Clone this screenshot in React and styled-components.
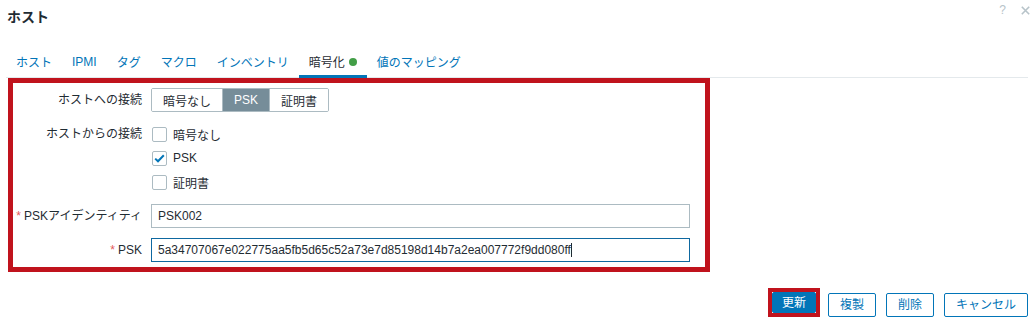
import React from "react";
import styled, { createGlobalStyle } from "styled-components";

const GlobalStyle = createGlobalStyle`
  html, body {
    margin: 0;
    padding: 0;
    background: #ffffff;
  }
  body {
    font-family: "Liberation Sans", Arial, "Noto Sans CJK JP", sans-serif;
    font-size: 12px;
    color: #1f2c33;
  }
`;

/* ---------------- layout ---------------- */

const Dialog = styled.div`
  width: 1034px;
  height: 323px;
  box-sizing: border-box;
  padding: 0 6px;
  display: flex;
  flex-direction: column;
  overflow: hidden;
`;

const Header = styled.header`
  height: 48px;
  display: flex;
  justify-content: space-between;
  align-items: flex-start;
`;

const Title = styled.h1`
  margin: 0;
  padding: 8px 0 0 1px;
  font-size: 14px;
  line-height: 18px;
  font-weight: bold;
  color: #1f2c33;
`;

const HeaderIcons = styled.div`
  display: flex;
  align-items: center;
  gap: 15px;
  height: 20px;
  margin-right: -2px;
  color: #b7c3c9;
  font-size: 12px;
`;

const TabBar = styled.nav`
  display: flex;
  border-bottom: 1px solid #e4e9ec;
`;

const Tab = styled.div`
  height: 30px;
  box-sizing: border-box;
  padding: 0 10px;
  display: flex;
  align-items: center;
  gap: 4px;
  color: ${({ $active }) => ($active ? "#1f2c33" : "#0275b8")};
  border-bottom: 3px solid ${({ $active }) => ($active ? "#0275b8" : "transparent")};
  margin-bottom: -1px;
  white-space: nowrap;
`;

const StatusDot = styled.span`
  width: 8px;
  height: 8px;
  border-radius: 50%;
  background: #429e47;
`;

/* red annotation frame around the form */
const Highlight = styled.section`
  margin: 0 318px 0 2px;
  border: 5px solid #c0131d;
  padding: 5px 15px 5px 0;
  display: grid;
  grid-template-columns: 129px 1fr;
  column-gap: 9px;
  row-gap: 10px;
`;

const Label = styled.div`
  text-align: right;
  line-height: 24px;
  white-space: nowrap;
  color: #1f2c33;
`;

const Required = styled.span`
  color: #e45959;
  margin-right: 3px;
`;

const Segmented = styled.div`
  display: inline-flex;
  height: 24px;
  border: 1px solid #acbbc2;
  border-radius: 2px;
  box-sizing: border-box;
  justify-self: start;
  overflow: hidden;
`;

const Segment = styled.span`
  padding: 0 11px;
  display: flex;
  align-items: center;
  background: ${({ $active }) => ($active ? "#768d99" : "#ffffff")};
  color: ${({ $active }) => ($active ? "#ffffff" : "#1f2c33")};
  border-left: ${({ $first }) => ($first ? "none" : "1px solid #acbbc2")};
`;

const CheckList = styled.div`
  display: flex;
  flex-direction: column;
`;

const CheckRow = styled.label`
  height: 24px;
  display: flex;
  align-items: center;
  gap: 6px;
  padding-left: 1px;
`;

const Box = styled.span`
  width: 15px;
  height: 15px;
  box-sizing: border-box;
  border: 1px solid #acbbc2;
  border-radius: 2px;
  display: flex;
  align-items: center;
  justify-content: center;
  background: #fff;
`;

const TextBox = styled.div`
  height: 24px;
  box-sizing: border-box;
  border: 1px solid ${({ $focused }) => ($focused ? "#0e68a0" : "#acbbc2")};
  padding: 0 6px;
  display: flex;
  align-items: center;
  color: #1f2c33;
  white-space: nowrap;
  overflow: hidden;
`;

const Caret = styled.span`
  display: inline-block;
  width: 1px;
  height: 14px;
  background: #1f2c33;
`;

const Footer = styled.footer`
  margin-top: 16px;
  display: flex;
  justify-content: flex-end;
  align-items: flex-end;
  gap: 10px;
`;

const Mark = styled.span`
  border: 4px solid #c0131d;
  display: flex;
  margin-right: -2px;
`;

const Button = styled.button`
  height: ${({ $primary }) => ($primary ? "21px" : "24px")};
  padding: 0 ${({ $primary }) => ($primary ? "9px" : "11px")};
  border: 1px solid #0275b8;
  border-radius: 2px;
  background: ${({ $primary }) => ($primary ? "#0275b8" : "#ffffff")};
  color: ${({ $primary }) => ($primary ? "#ffffff" : "#0275b8")};
  font-family: inherit;
  font-size: 12px;
  line-height: 1;
  cursor: pointer;
`;

/* ---------------- icons ---------------- */

const CheckIcon = () => (
  <svg width="11" height="9" viewBox="0 0 11 9" aria-hidden="true">
    <path d="M1.2 4.6 L4 7.3 L9.8 1.3" fill="none" stroke="#0275b8" strokeWidth="2" />
  </svg>
);

const CloseIcon = () => (
  <svg width="9" height="9" viewBox="0 0 9 9" aria-hidden="true">
    <path d="M0.8 0.8 L8.2 8.2 M8.2 0.8 L0.8 8.2" stroke="#b7c3c9" strokeWidth="1.6" />
  </svg>
);

/* ---------------- data ---------------- */

const tabs = ["ホスト", "IPMI", "タグ", "マクロ", "インベントリ", "暗号化", "値のマッピング"];
const connectTo = ["暗号なし", "PSK", "証明書"];
const connectFrom = [
  { label: "暗号なし", checked: false },
  { label: "PSK", checked: true },
  { label: "証明書", checked: false },
];

export default function App() {
  return (
    <>
      <GlobalStyle />
      <Dialog>
        <Header>
          <Title>ホスト</Title>
          <HeaderIcons>
            <span>?</span>
            <CloseIcon />
          </HeaderIcons>
        </Header>

        <TabBar>
          {tabs.map((t) => (
            <Tab key={t} $active={t === "暗号化"}>
              {t}
              {t === "暗号化" && <StatusDot />}
            </Tab>
          ))}
        </TabBar>

        <Highlight>
          <Label>ホストへの接続</Label>
          <Segmented>
            {connectTo.map((s, i) => (
              <Segment key={s} $first={i === 0} $active={s === "PSK"}>
                {s}
              </Segment>
            ))}
          </Segmented>

          <Label>ホストからの接続</Label>
          <CheckList>
            {connectFrom.map((c) => (
              <CheckRow key={c.label}>
                <Box>{c.checked && <CheckIcon />}</Box>
                {c.label}
              </CheckRow>
            ))}
          </CheckList>

          <Label>
            <Required>*</Required>PSKアイデンティティ
          </Label>
          <TextBox>PSK002</TextBox>

          <Label>
            <Required>*</Required>PSK
          </Label>
          <TextBox $focused>
            5a34707067e022775aa5fb5d65c52a73e7d85198d14b7a2ea007772f9dd080ff
            <Caret />
          </TextBox>
        </Highlight>

        <Footer>
          <Mark>
            <Button $primary>更新</Button>
          </Mark>
          <Button>複製</Button>
          <Button>削除</Button>
          <Button>キャンセル</Button>
        </Footer>
      </Dialog>
    </>
  );
}
